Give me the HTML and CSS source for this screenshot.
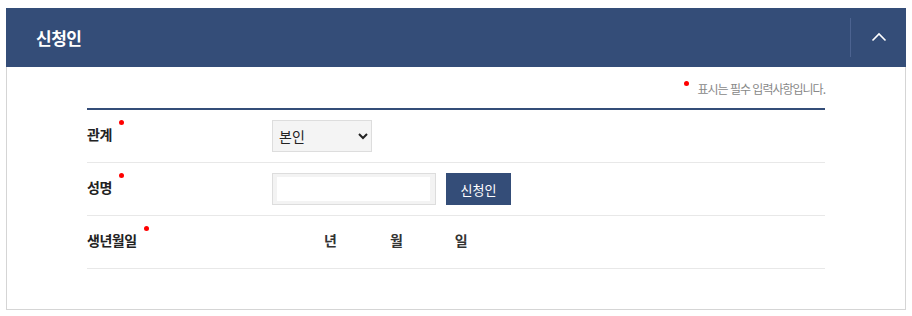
FILE: index.html
```html
<!DOCTYPE html>
<html lang="ko">
<head>
<meta charset="utf-8" />
<title>신청인</title>
<link rel="stylesheet" href="styles.css">
</head>
<body>
	<div class="panel">
		<div class="panelHead">
			<h2 class="panelTitle">신청인</h2>
			<button class="toggle" type="button">
				<svg width="16" height="10" viewBox="0 0 16 10"><path d="M1.5 8.5 L8 2 L14.5 8.5" fill="none" stroke="#fff" stroke-width="1.6"/></svg>
			</button>
		</div>
		<div class="panelBody">
			<p class="reqNote"><span class="dot"></span>표시는 필수 입력사항입니다.</p>
			<div class="formTable">
				<div class="formRow">
					<div class="label"><span class="req">관계</span></div>
					<div class="field">
						<select class="selectBox">
							<option>본인</option>
						</select>
					</div>
				</div>
				<div class="formRow">
					<div class="label"><span class="req">성명</span></div>
					<div class="field">
						<input class="textInput" type="text" />
						<button class="button" type="button">신청인</button>
					</div>
				</div>
				<div class="formRow">
					<div class="label"><span class="req">생년월일</span></div>
					<div class="field dates">
						<span class="datePick first"></span><span class="unit">년</span>
						<span class="datePick"></span><span class="unit">월</span>
						<span class="datePick last"></span><span class="unit">일</span>
					</div>
				</div>
			</div>
		</div>
	</div>
</body>
</html>
```

FILE: styles.css
```css
html {
	font-family: "Noto Sans CJK KR", "Noto Sans", sans-serif;
}

body {
	margin: 0;
	background: #fff;
}

.panel {
	margin: 8px 6px 0 6px;
	width: 900px;
}

.panelHead {
	height: 59px;
	background-color: #344d78;
	display: flex;
	align-items: center;
	justify-content: space-between;
}

.panelTitle {
	margin: 0 0 0 30px;
	color: #fff;
	font-size: 17px;
	font-weight: bold;
	letter-spacing: -0.5px;
}

.toggle {
	width: 56px;
	height: 39px;
	border: none;
	border-left: 1px solid #4c6390;
	background: transparent;
	display: flex;
	align-items: center;
	justify-content: center;
	padding: 0 0 2px 0;
	cursor: pointer;
}

.panelBody {
	border: 1px solid #d5d5d5;
	border-top: none;
	height: 242px;
	padding: 0 80px;
}

.reqNote {
	margin: 0;
	height: 40px;
	display: flex;
	align-items: center;
	justify-content: flex-end;
	font-size: 12px;
	color: #888;
	letter-spacing: -1px;
	padding-top: 1px;
}

.dot {
	width: 5px;
	height: 5px;
	border-radius: 50%;
	background: #f00;
	margin-right: 8px;
	position: relative;
	top: -5px;
}

.formTable {
	border-top: 2px solid #344d78;
}

.formRow {
	display: flex;
	align-items: center;
	height: 52px;
	border-bottom: 1px solid #e8e8e8;
}

.label {
	width: 185px;
	font-size: 14px;
	font-weight: bold;
	color: #222;
	letter-spacing: -0.5px;
	padding-bottom: 4px;
}

.req {
	position: relative;
}

.req::after {
	content: "";
	position: absolute;
	right: -12px;
	top: -4px;
	width: 5px;
	height: 5px;
	border-radius: 50%;
	background: #f00;
}

.field {
	display: flex;
	align-items: center;
}

.dates {
	padding-bottom: 4px;
}

.selectBox {
	width: 100px;
	height: 32px;
	background-color: #f4f4f4;
	border: 1px solid #ddd;
	border-radius: 0;
	font-family: inherit;
	font-size: 14px;
	color: #222;
	padding: 0 2px;
}

.textInput {
	box-sizing: border-box;
	width: 164px;
	height: 32px;
	border: 1px solid #ddd;
	box-shadow: inset 4px 3px 0 #f3f3f3, inset -5px -3px 0 #f3f3f3;
	margin: 0;
	padding: 0 6px;
}

.button {
	margin-left: 10px;
	width: 65px;
	height: 32px;
	border: none;
	background-color: #344d78;
	color: #fff;
	font-family: inherit;
	font-size: 13px;
	cursor: pointer;
}

.datePick {
	display: inline-block;
	width: 53px;
}

.datePick.first {
	width: 52px;
}

.datePick.last {
	width: 52px;
}

.unit {
	font-size: 14px;
	font-weight: bold;
	color: #333;
}
```
